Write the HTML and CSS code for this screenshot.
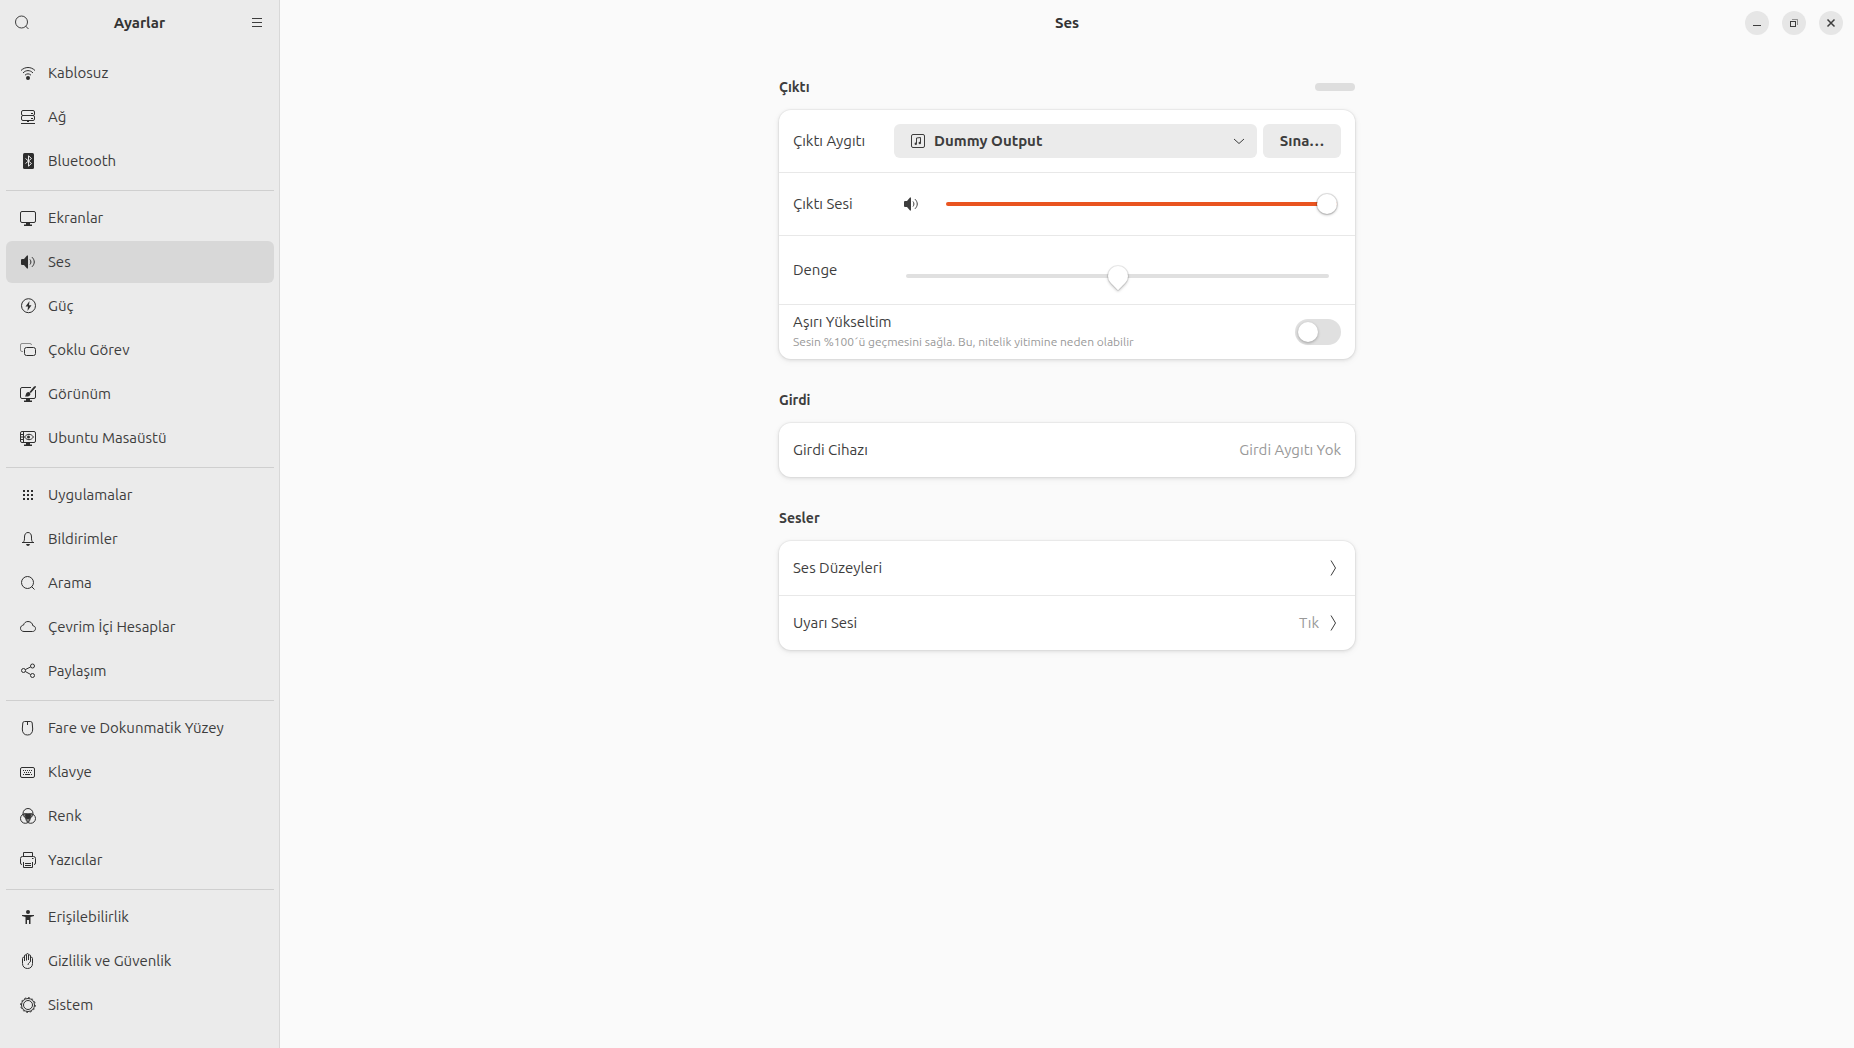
FILE: index.html
```html
<!DOCTYPE html>
<html lang="tr">
<head>
    <meta charset="UTF-8">
    <meta name="viewport" content="width=device-width, initial-scale=1.0">
    <title>Ayarlar - Ses</title>
    <link rel="stylesheet" href="styles.css">
</head>
<body>
    <aside class="sidebar">
        <header class="sidebar-header">
            <button class="icon-button" aria-label="Ara">
                <svg class="icon" viewBox="0 0 16 16"><circle cx="7.5" cy="7" r="6"/><path d="M11.5 11l3 3"/></svg>
            </button>
            <h1 class="title">Ayarlar</h1>
            <button class="icon-button" aria-label="Menü">
                <svg class="icon" viewBox="0 0 16 16"><path d="M3 3.500h10M3 7.500h10M3 11.500h10"/></svg>
            </button>
        </header>

        <nav class="nav">
            <a class="nav-item" href="#">
                <svg class="icon" viewBox="0 0 16 16"><path d="M1 5.5c4-4 10-4 14 0M3 8c3-3.200 7-3.200 10 0M5 10.200c1.800-1.800 4.200-1.800 6 0"/><circle class="fill" cx="8" cy="13" r="2"/></svg>
                Kablosuz
            </a>
            <a class="nav-item" href="#">
                <svg class="icon" viewBox="0 0 16 16"><rect x="1.5" y="1.5" width="13" height="5" rx="1.5"/><rect x="1.5" y="6.5" width="13" height="5" rx="1.5"/><path d="M1 14.5h14M7 12.500h2M11 4.500h2M11 9.500h2"/></svg>
                Ağ
            </a>
            <a class="nav-item" href="#">
                <svg class="icon" viewBox="0 0 16 16"><rect class="fill" x="3" y="0" width="11" height="16" rx="1.5"/><path class="cutout" d="M5.5 5.5l6 5-3 2.700v-10.400l3 2.700-6 5"/></svg>
                Bluetooth
            </a>
            <hr class="nav-separator">
            <a class="nav-item" href="#">
                <svg class="icon" viewBox="0 0 16 16"><rect x="0.5" y="1.5" width="15" height="11" rx="1.5"/><path class="fill" d="M6 13h4v1.500h2v1.500h-8v-1.500h2z"/></svg>
                Ekranlar
            </a>
            <a class="nav-item active" href="#" aria-current="page">
                <svg class="icon" viewBox="0 0 16 16"><path class="fill" d="M1 6q0-1 1-1h2l3-3.500h1v13h-1l-3-3.500h-2q-1 0-1-1z"/><path d="M10 5.5c1.200 1.500 1.200 3.500 0 5M12 3.200c3 3 3 6.600 0 9.600"/></svg>
                Ses
            </a>
            <a class="nav-item" href="#">
                <svg class="icon" viewBox="0 0 16 16"><circle cx="8.5" cy="7.7" r="7"/><path class="fill" d="M9.5 3l-4 5.500h2.500l-0.500 4.500 4-5.700h-2.500z"/></svg>
                Güç
            </a>
            <a class="nav-item" href="#">
                <svg class="icon" viewBox="0 0 16 16"><path class="dim" d="M3 9.5h-1q-1.500 0-1.500-1.500v-5q0-1.500 1.500-1.500h8q1.500 0 1.500 1.500"/><rect x="4.5" y="5.5" width="11" height="8" rx="2"/></svg>
                Çoklu Görev
            </a>
            <a class="nav-item" href="#">
                <svg class="icon" viewBox="0 0 16 16"><path d="M11 1.5h-9q-1.500 0-1.500 1.500v8q0 1.500 1.500 1.500h12q1.500 0 1.500-1.500v-7"/><path class="fill" d="M6 13h4v1.500h2v1.500h-8v-1.500h2zM5 10.500c1-1 0.500-2.500 1.700-3.700 1.200-1.100 2.500-0.800 3.200 0 1 1.200 0.500 2.600-0.700 3.200-1.200 0.700-2.800 0.700-4.200 0.500zM9.500 6l4.500-5.500 2-0.500-0.300 1.500-4.900 5.500z"/></svg>
                Görünüm
            </a>
            <a class="nav-item" href="#">
                <svg class="icon" viewBox="0 0 16 16"><rect x="0.5" y="1.5" width="15" height="11" rx="1.5"/><path d="M3.500 2v10M1 4.500h2M1 7h2M1 9.500h2M4.500 7c2.500-3.600 6.500-3.600 9 0-2.500 3.600-6.500 3.600-9 0z"/><circle class="fill" cx="8.5" cy="7" r="1.5"/><path class="fill" d="M6 13h4v1.500h2v1.500h-8v-1.500h2z"/></svg>
                Ubuntu Masaüstü
            </a>
            <hr class="nav-separator">
            <a class="nav-item" href="#">
                <svg class="icon" viewBox="0 0 16 16"><path class="fill" d="M3 3h2v2h-2zM7 3h2v2h-2zM11 3h2v2h-2zM3 7h2v2h-2zM7 7h2v2h-2zM11 7h2v2h-2zM3 11h2v2h-2zM7 11h2v2h-2zM11 11h2v2h-2z"/></svg>
                Uygulamalar
            </a>
            <a class="nav-item" href="#">
                <svg class="icon" viewBox="0 0 16 16"><path d="M2 11.500h12M3 11.500c1.500-1.500 1.500-2.500 1.500-5.500 0-3 1.500-4.500 3.500-4.500s3.500 1.500 3.500 4.500c0 3 0 4 1.500 5.500"/><path class="fill" d="M6 13h4q-0.500 2-2 2t-2-2z"/></svg>
                Bildirimler
            </a>
            <a class="nav-item" href="#">
                <svg class="icon" viewBox="0 0 16 16"><circle cx="7.5" cy="7.5" r="6"/><path d="M11.5 11.500l3 3"/></svg>
                Arama
            </a>
            <a class="nav-item" href="#">
                <svg class="icon" viewBox="0 0 16 16"><path d="M4 12.500c-2 0-3.500-1.300-3.500-3.200 0-1.700 1.200-3 3-3.200 0.600-2.200 2.200-3.600 4.500-3.600 2.700 0 4.600 1.800 4.800 4.200 1.700 0.300 2.700 1.300 2.700 2.800 0 1.800-1.300 3-3 3z"/></svg>
                Çevrim İçi Hesaplar
            </a>
            <a class="nav-item" href="#">
                <svg class="icon" viewBox="0 0 16 16"><circle cx="3.5" cy="7.5" r="2"/><circle cx="12.5" cy="3" r="2"/><circle cx="12.5" cy="12.5" r="2"/><path d="M5.300 6.600l5.400-2.700M5.300 8.500l5.400 3"/></svg>
                Paylaşım
            </a>
            <hr class="nav-separator">
            <a class="nav-item" href="#">
                <svg class="icon" viewBox="0 0 16 16"><path d="M4.500 1.500h6q1.500 0 1.700 1.500l0.500 6c0 4-2 6-5.200 6s-5.200-2-5.200-6l0.500-6q0.200-1.500 1.700-1.500zM7.500 2v3"/></svg>
                Fare ve Dokunmatik Yüzey
            </a>
            <a class="nav-item" href="#">
                <svg class="icon" viewBox="0 0 16 16"><rect x="0.5" y="3.5" width="14" height="10" rx="1.5"/><path class="fill" d="M3 6h1v1h-1zM5 6h1v1h-1zM7 6h1v1h-1zM9 6h1v1h-1zM11 6h1v1h-1zM4 8h1v1h-1zM6 8h1v1h-1zM8 8h1v1h-1zM10 8h1v1h-1zM3 10h1v1h-1zM5 10h5v1h-5zM11 10h1v1h-1z"/></svg>
                Klavye
            </a>
            <a class="nav-item" href="#">
                <svg class="icon" viewBox="0 0 16 16"><circle cx="8" cy="5.5" r="5"/><circle cx="5.3" cy="10.5" r="4.8"/><circle cx="10.7" cy="10.5" r="4.8"/><path class="fill half" d="M3 6q5-2 10 0l-2 4-3 5-3-5z"/><path class="fill" d="M5 6.500q3-1.500 6 0 0 3-3 4.500-3-1.500-3-4.500z"/></svg>
                Renk
            </a>
            <a class="nav-item" href="#">
                <svg class="icon" viewBox="0 0 16 16"><path d="M3.500 4v-3.500h9v3.500M2 12.500q-1.500 0-1.500-1.500v-4.500q0-2 2-2h11q2 0 2 2v4.500q0 1.500-1.500 1.500M3.500 10v5.500h9v-5.500M5 11.500h6M5 13.500h6M12 6.500h1.500"/></svg>
                Yazıcılar
            </a>
            <hr class="nav-separator">
            <a class="nav-item" href="#">
                <svg class="icon" viewBox="0 0 16 16"><circle class="fill" cx="8" cy="3" r="2"/><path class="fill" d="M2 6h12v1l-3.500 1v7h-1.500v-4h-2v4h-1.500v-7l-3.500-1z"/></svg>
                Erişilebilirlik
            </a>
            <a class="nav-item" href="#">
                <svg class="icon" viewBox="0 0 16 16"><path d="M4.500 8v-5q0-1.200 1-1.200t1 1.200v4.500M6.500 7v-5.300q0-1.200 1-1.200t1 1.200v5.300M8.500 7v-4q0-1.200 1-1.200t1 1.200v5M10.500 8v-2.500q0-1.200 1-1.200t1 1.200v5c0 3-2 5-5 5s-5-2-5-5v-5q0-1.200 1-1.200t1 1.200v2.500M10.500 8c0 1.800-2.500 1.500-2.500 4"/></svg>
                Gizlilik ve Güvenlik
            </a>
            <a class="nav-item" href="#">
                <svg class="icon" viewBox="0 0 16 16"><circle cx="8" cy="8" r="6.5"/><circle cx="8" cy="8" r="4.5"/><circle class="teeth" cx="8" cy="8" r="7.3" pathLength="48"/></svg>
                Sistem
            </a>
        </nav>
    </aside>

    <main class="content">
        <header class="titlebar">
            <h2 class="title">Ses</h2>
            <div class="window-controls">
                <button class="window-button" aria-label="Küçült">
                    <svg class="icon" viewBox="0 0 16 16"><path d="M4 10.500h8"/></svg>
                </button>
                <button class="window-button" aria-label="Geri yükle">
                    <svg class="icon" viewBox="0 0 16 16"><rect x="4.5" y="6.5" width="5" height="5"/><path class="dim" d="M6 4.500h5.500v5.500"/></svg>
                </button>
                <button class="window-button" aria-label="Kapat">
                    <svg class="icon heavy" viewBox="0 0 16 16"><path d="M4.500 4.500l7 7M11.500 4.500l-7 7"/></svg>
                </button>
            </div>
        </header>

        <div class="page">
            <section class="group">
                <div class="group-header">
                    <h3>Çıktı</h3>
                    <div class="level-bar"></div>
                </div>
                <div class="card">
                    <div class="row tall">
                        <label class="row-label" for="device">Çıktı Aygıtı</label>
                        <div class="combo">
                            <svg class="icon" viewBox="0 0 16 16"><rect x="1.5" y="1.5" width="13" height="13" rx="1.5"/><path d="M6.500 10.500v-5.500l4-0.500v5.500"/><circle class="fill" cx="5.8" cy="10.7" r="1.2"/><circle class="fill" cx="9.8" cy="10" r="1.2"/></svg>
                            <select id="device">
                                <option>Dummy Output</option>
                            </select>
                            <svg class="icon combo-arrow" viewBox="0 0 16 16"><path d="M3 6l5 4.500 5-4.500"/></svg>
                        </div>
                        <button class="button">Sına…</button>
                    </div>
                    <div class="row tall">
                        <label class="row-label" for="volume">Çıktı Sesi</label>
                        <svg class="icon volume-icon" viewBox="0 0 16 16"><path class="fill" d="M1 6q0-1 1-1h2l3-3.500h1v13h-1l-3-3.500h-2q-1 0-1-1z"/><path d="M10 5.500c1.200 1.500 1.200 3.500 0 5M12 3.200c3 3 3 6.600 0 9.600"/></svg>
                        <input class="slider volume" type="range" id="volume" min="0" max="100" value="100">
                    </div>
                    <div class="row taller">
                        <label class="row-label" for="balance">Denge</label>
                        <input class="slider balance" type="range" id="balance" min="-50" max="50" value="0">
                    </div>
                    <div class="row">
                        <label class="row-text" for="boost">
                            Aşırı Yükseltim
                            <span class="subtitle">Sesin %100´ü geçmesini sağla. Bu, nitelik yitimine neden olabilir</span>
                        </label>
                        <input class="switch" type="checkbox" role="switch" id="boost">
                    </div>
                </div>
            </section>

            <section class="group">
                <div class="group-header">
                    <h3>Girdi</h3>
                </div>
                <div class="card">
                    <div class="row">
                        <span class="row-text">Girdi Cihazı</span>
                        <span class="value">Girdi Aygıtı Yok</span>
                    </div>
                </div>
            </section>

            <section class="group">
                <div class="group-header">
                    <h3>Sesler</h3>
                </div>
                <div class="card">
                    <a class="row" href="#">
                        <span class="row-text">Ses Düzeyleri</span>
                        <svg class="icon" viewBox="0 0 16 16"><path d="M6 0.500l4.500 7.500-4.500 7.500"/></svg>
                    </a>
                    <a class="row" href="#">
                        <span class="row-text">Uyarı Sesi</span>
                        <span class="value">Tık</span>
                        <svg class="icon" viewBox="0 0 16 16"><path d="M6 0.500l4.500 7.500-4.500 7.500"/></svg>
                    </a>
                </div>
            </section>
        </div>
    </main>
</body>
</html>
```

FILE: styles.css
```css
* { box-sizing: border-box; }
body {
    margin: 0;
    min-height: 100vh;
    display: flex;
    font-family: Ubuntu, "Noto Sans", sans-serif;
    font-size: 15px;
    line-height: 20px;
    color: #3d3d3d;
    background: #fafafa;
}
a { color: inherit; text-decoration: none; }
button, select { font: inherit; color: inherit; border: none; padding: 0; }
h1, h2, h3 { margin: 0; font-size: 15px; font-weight: bold; }
h3 { font-size: 14px; }

/* icons */
.icon {
    width: 16px;
    height: 16px;
    flex: none;
    display: block;
    fill: none;
    stroke: currentColor;
    stroke-width: 1;
}
.icon .fill { fill: currentColor; stroke: none; }
.icon .cutout { stroke: #ebebeb; }
.icon .dim { opacity: 0.5; }
.icon .half { opacity: 0.6; }
.icon .teeth { stroke-dasharray: 2 2; }
.icon.heavy { stroke-width: 1.5; }

/* sidebar */
.sidebar {
    width: 280px;
    flex: none;
    background: #ebebeb;
    border-right: 1px solid #d8d8d8;
}
.sidebar-header {
    height: 46px;
    padding: 0 14px;
    display: flex;
    align-items: center;
    justify-content: space-between;
}
.icon-button { background: none; }
.title { color: #333; }
.nav {
    padding: 6px 5px 6px 6px;
    display: flex;
    flex-direction: column;
    gap: 2px;
}
.nav-item {
    height: 42px;
    padding: 0 14px;
    display: flex;
    align-items: center;
    gap: 12px;
    border-radius: 6px;
}
.nav-item .icon { color: #2e2e2e; }
.nav-item.active { background: #d8d8d8; }
.nav-separator {
    width: 100%;
    height: 1px;
    margin: 6px 0 4px;
    border: none;
    background: #cfcfcf;
}

/* content */
.content { flex: 1; min-width: 0; }
.titlebar {
    height: 46px;
    padding: 0 11px;
    display: grid;
    grid-template-columns: 1fr auto 1fr;
    align-items: center;
}
.titlebar .title { grid-column: 2; }
.window-controls { display: flex; justify-content: flex-end; gap: 13px; }
.window-button {
    width: 24px;
    height: 24px;
    display: grid;
    place-items: center;
    border-radius: 50%;
    background: #e6e6e6;
}
.page {
    max-width: 600px;
    margin: 0 auto;
    padding: 30px 12px;
    display: flex;
    flex-direction: column;
    gap: 30px;
}
.group-header {
    height: 22px;
    margin-bottom: 12px;
    display: flex;
    align-items: center;
    justify-content: space-between;
}
.level-bar {
    width: 40px;
    height: 8px;
    border-radius: 4px;
    background: #dedede;
}
.card {
    background: #fff;
    border-radius: 12px;
    box-shadow: 0 0 0 1px rgba(0, 0, 0, 0.03), 0 1px 3px 1px rgba(0, 0, 0, 0.07), 0 2px 6px 2px rgba(0, 0, 0, 0.03);
}
.row {
    min-height: 54px;
    padding: 0 14px;
    display: flex;
    align-items: center;
    gap: 6px;
    box-sizing: content-box;
}
.row + .row { border-top: 1px solid #e8e8e8; }
.row.tall { min-height: 62px; }
.row.taller { min-height: 68px; }
.row-label { width: 95px; flex: none; }
.row-text { flex: 1; }
.subtitle {
    display: block;
    font-size: 12px;
    color: #999;
}
.value { color: #999; }

.combo {
    flex: 1;
    height: 34px;
    padding: 0 10px 0 16px;
    display: flex;
    align-items: center;
    border-radius: 6px;
    background: #ebebeb;
}
.combo select {
    flex: 1;
    min-width: 0;
    height: 34px;
    padding: 0 8px;
    font-weight: bold;
    background: none;
    appearance: none;
}
.button {
    width: 78px;
    height: 34px;
    font-weight: bold;
    border-radius: 6px;
    background: #ebebeb;
}

/* sliders */
.slider {
    flex: 1;
    min-width: 0;
    height: 20px;
    margin: 0 4px 0 21px;
    appearance: none;
    background: none;
}
.slider::-webkit-slider-runnable-track {
    height: 4px;
    border-radius: 2px;
    background: #e0e0e0;
}
.slider::-webkit-slider-thumb {
    appearance: none;
    width: 20px;
    height: 20px;
    margin-top: -8px;
    border-radius: 50%;
    background: #fff;
    box-shadow: 0 0 0 1px rgba(0, 0, 0, 0.1), 0 1px 3px rgba(0, 0, 0, 0.3);
}
.volume-icon { margin-left: 9px; }
.volume::-webkit-slider-runnable-track { background: #e95420; }
.balance { height: 32px; margin: 0 12px; padding-top: 12px; }
.balance::-webkit-slider-thumb {
    border-radius: 50% 50% 0 50%;
    transform: rotate(45deg);
    box-shadow: 0 0 0 1px rgba(0, 0, 0, 0.08), 1px 1px 3px rgba(0, 0, 0, 0.25);
}

.switch {
    width: 46px;
    height: 26px;
    margin: 0;
    padding: 3px;
    flex: none;
    appearance: none;
    border-radius: 13px;
    background: #e0e0e0;
}
.switch::before {
    content: "";
    display: block;
    width: 20px;
    height: 20px;
    border-radius: 50%;
    background: #fff;
    box-shadow: 0 1px 3px rgba(0, 0, 0, 0.3);
}
.switch:checked { background: #e95420; }
.switch:checked::before { margin-left: 20px; }
```
